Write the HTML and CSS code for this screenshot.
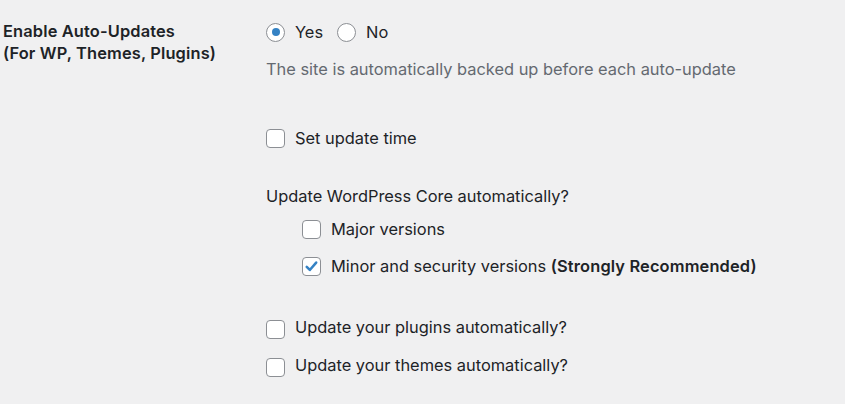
FILE: index.html
```html
<!DOCTYPE html>
<html lang="en">
<head>
  <meta charset="UTF-8" />
  <title>Auto-Updates Settings</title>
  <link rel="stylesheet" href="styles.css">
</head>
<body>
  <div class="settings-row">
    <div class="settings-label">Enable Auto-Updates<br>(For WP, Themes, Plugins)</div>

    <div class="settings-field">
      <div class="radio-group">
        <label class="option"><span class="radio radio-checked"></span>Yes</label>
        <label class="option"><span class="radio"></span>No</label>
      </div>
      <p class="description">The site is automatically backed up before each auto-update</p>

      <label class="option option-time"><span class="checkbox"></span>Set update time</label>

      <p class="core-title">Update WordPress Core automatically?</p>
      <div class="core-options">
        <label class="option"><span class="checkbox"></span>Major versions</label>
        <label class="option">
          <span class="checkbox">
            <svg viewBox="0 0 20 20" width="17" height="17"><path d="M4.4 10.4l3.6 3.7 7.5-8.7" fill="none" stroke="#3582c4" stroke-width="3" stroke-linecap="round" stroke-linejoin="round"/></svg>
          </span>
          <span>Minor and security versions <strong>(Strongly Recommended)</strong></span>
        </label>
      </div>

      <div class="extra-options">
        <label class="option option-low"><span class="checkbox"></span>Update your plugins automatically?</label>
        <label class="option option-low"><span class="checkbox"></span>Update your themes automatically?</label>
      </div>
    </div>
  </div>
</body>
</html>
```

FILE: styles.css
```css
body {
  margin: 0;
  padding: 0;
  background: #f0f0f1;
  color: #1d2327;
  font-family: 'Inter', 'Noto Sans', sans-serif;
  font-size: 16.4px;
  line-height: 22px;
}

.settings-row {
  display: grid;
  grid-template-columns: 263px 1fr;
  padding: 20px 0 0 3px;
}

.settings-label {
  font-weight: 600;
  letter-spacing: 0.15px;
}

.settings-field {
  display: flex;
  flex-direction: column;
  align-items: flex-start;
  padding-top: 1px;
}

.radio-group {
  display: flex;
  gap: 14px;
}

.option {
  display: flex;
  align-items: center;
  gap: 10px;
}

.radio {
  width: 17px;
  height: 17px;
  border: 1px solid #8c8f94;
  border-radius: 50%;
  background: #fff;
  display: flex;
  align-items: center;
  justify-content: center;
}

.radio-checked::after {
  content: '';
  width: 8px;
  height: 8px;
  border-radius: 50%;
  background: #3582c4;
}

.checkbox {
  width: 17px;
  height: 17px;
  border: 1px solid #8c8f94;
  border-radius: 4px;
  background: #fff;
  display: flex;
  align-items: center;
  justify-content: center;
  flex-shrink: 0;
}

.description {
  margin: 15px 0 0;
  color: #646970;
}

.option-time {
  margin-top: 47px;
}

.core-title {
  margin: 36px 0 0;
}

.core-options {
  display: flex;
  flex-direction: column;
  gap: 15px;
  margin: 11px 0 0 36px;
}

.core-options strong {
  font-weight: 600;
  letter-spacing: 0.15px;
}

.extra-options {
  display: flex;
  flex-direction: column;
  gap: 15px;
  margin-top: 39px;
}

.option-low {
  align-items: flex-start;
}

.option-low .checkbox {
  margin-top: 4px;
}
```
